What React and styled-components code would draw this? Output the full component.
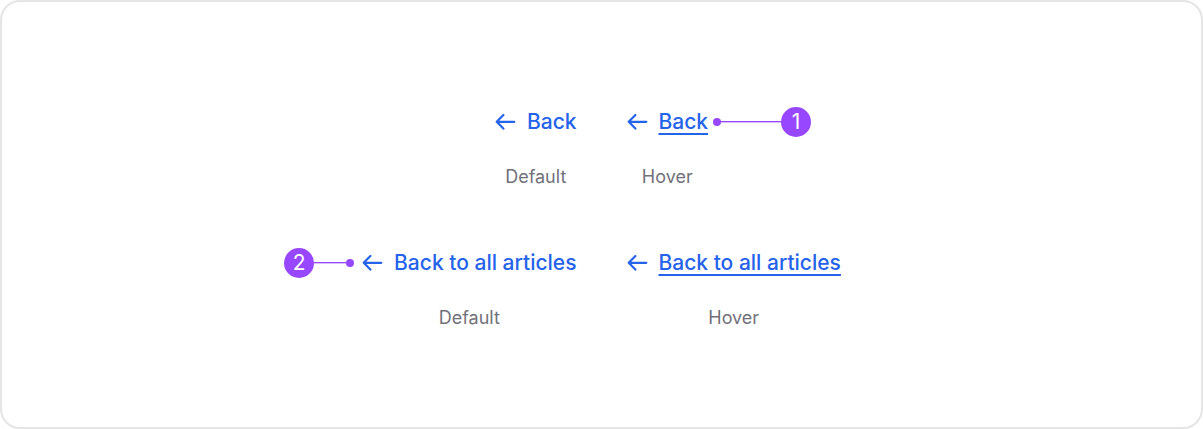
import React from "react";
import styled, { createGlobalStyle, css } from "styled-components";

const GlobalStyle = createGlobalStyle`
  *, *::before, *::after { box-sizing: border-box; }
  body {
    margin: 0;
    background: #fff;
    font-family: Inter, "Liberation Sans", sans-serif;
  }
`;

const Frame = styled.main`
  display: flex;
  flex-direction: column;
  justify-content: center;
  gap: 59px;
  min-height: 100vh;
  padding: 32px 24px 24px;
  border: 2px solid #e5e5e5;
  border-radius: 20px;
  background: #fff;
`;

const ExampleRow = styled.section`
  display: grid;
  grid-template-columns: 1fr 1fr;
  column-gap: 50px;
`;

const Example = styled.figure`
  display: grid;
  grid-template-columns: auto auto;
  justify-content: ${(p) => p.$side};
  align-items: center;
  row-gap: 27px;
  margin: 0;
`;

const BackLink = styled.a`
  grid-row: 1;
  grid-column: ${(p) => p.$column};
  display: flex;
  align-items: center;
  gap: 11px;
  color: #2563eb;
  font-size: 21px;
  font-weight: 500;
  line-height: 30px;
  text-decoration: none;

  span {
    text-decoration-thickness: 2px;
    text-underline-offset: 4px;
    text-decoration-skip-ink: none;
    ${(p) => p.$hovered && css`text-decoration-line: underline;`}
  }

  &:hover span { text-decoration-line: underline; }
`;

const Caption = styled.figcaption`
  grid-row: 2;
  grid-column: ${(p) => p.$column};
  color: #71717a;
  font-size: 18px;
  line-height: 25px;
  text-align: center;
`;

const Callout = styled.div`
  grid-row: 1;
  grid-column: ${(p) => p.$column};
  display: flex;
  flex-direction: ${(p) => (p.$column === 1 ? "row-reverse" : "row")};
  align-items: center;
  padding: ${(p) => (p.$column === 1 ? "0 8px 0 0" : "0 0 0 5px")};
`;

const Dot = styled.span`
  width: 8px;
  height: 8px;
  border-radius: 50%;
  background: #9747ff;
`;

const Leader = styled.span`
  width: ${(p) => p.$length}px;
  height: 2px;
  background: linear-gradient(#9747ff 50%, #d9bcff 50%);
`;

const Badge = styled.span`
  width: 30px;
  height: 30px;
  border-radius: 50%;
  background: #9747ff;
  color: #fff;
  font-size: 21px;
  line-height: 30px;
  text-align: center;
`;

function ArrowLeft() {
  return (
    <svg width="21" height="20" viewBox="0 0 21 20" fill="none" stroke="currentColor"
      strokeWidth="2.2" strokeLinecap="round" strokeLinejoin="round" aria-hidden="true">
      <path d="M19.3 9.8H1.9M8.4 3L1.7 9.8l6.7 6.8" />
    </svg>
  );
}

function BackExample({ text, state, side, note, leader }) {
  const column = side === "end" ? 2 : 1;
  return (
    <Example $side={side}>
      <BackLink href="#" $column={column} $hovered={state === "Hover"}>
        <ArrowLeft />
        <span>{text}</span>
      </BackLink>
      {note && (
        <Callout $column={side === "end" ? 1 : 2}>
          <Dot />
          <Leader $length={leader} />
          <Badge>{note}</Badge>
        </Callout>
      )}
      <Caption $column={column}>{state}</Caption>
    </Example>
  );
}

export default function App() {
  return (
    <>
      <GlobalStyle />
      <Frame>
        <ExampleRow>
          <BackExample text="Back" state="Default" side="end" />
          <BackExample text="Back" state="Hover" side="start" note="1" leader={60} />
        </ExampleRow>
        <ExampleRow>
          <BackExample text="Back to all articles" state="Default" side="end" note="2" leader={32} />
          <BackExample text="Back to all articles" state="Hover" side="start" />
        </ExampleRow>
      </Frame>
    </>
  );
}
